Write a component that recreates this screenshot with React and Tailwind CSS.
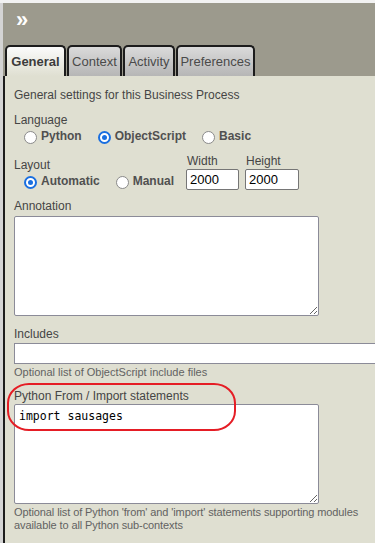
import React from 'react';

const Radio = ({ checked, label }) => (
  <label className="flex items-center gap-[4px] font-bold text-[12px] text-[#505050]">
    {checked ? (
      <span className="w-[13px] h-[13px] rounded-full border-2 border-[#1a6fe0] bg-white flex items-center justify-center">
        <span className="w-[5px] h-[5px] rounded-full bg-[#1a6fe0]" />
      </span>
    ) : (
      <span className="w-[13px] h-[13px] rounded-full border border-[#8a8a8a] bg-white" />
    )}
    <span className="leading-[14px] -mt-[3px]">{label}</span>
  </label>
);

const tabs = [
  { name: 'General', w: 'w-[61px]', active: true },
  { name: 'Context', w: 'w-[55px]' },
  { name: 'Activity', w: 'w-[52px]' },
  { name: 'Preferences', w: 'w-[79px]' },
];

export default function App() {
  return (
    <div className="w-[375px] h-[543px] overflow-hidden bg-[#f2f2f2] pt-[3px] font-['Liberation_Sans',Arial,sans-serif]">
      <div className="flex h-full">
        <div className="w-[3px] shrink-0 bg-[#d4d4d4]" />
        <div className="flex-1 min-w-0 flex flex-col">
          {/* header */}
          <div className="bg-[#9c9a8d] h-[42px] pl-[13px] pt-[6px]">
            <span className="text-white font-bold text-[22px] leading-[22px]">»</span>
          </div>
          {/* tabs */}
          <div className="bg-[#9c9a8d] flex items-end gap-[1px] pl-[2px] h-[31px]">
            {tabs.map((t) => (
              <div
                key={t.name}
                className={`${t.w} h-[31px] border-2 border-b-0 border-[#1c1c1c] rounded-t-[5px] flex items-center justify-center text-[13px] pt-[1px] ${
                  t.active
                    ? 'bg-gradient-to-b from-[#fbfbfb] to-[#dfdfd1] font-bold text-[#3c3c3c]'
                    : 'bg-gradient-to-b from-[#dadada] to-[#b6b6b6] text-[#4a4a4a]'
                }`}
              >
                {t.name}
              </div>
            ))}
          </div>
          {/* body */}
          <div className="flex-1 relative overflow-hidden bg-[#dfdfd1] border-l-2 border-[#1c1c1c] pl-[9px] pt-[12px] text-[12px] text-[#454545]">
            <div className="leading-[14px]">General settings for this Business Process</div>

            <div className="leading-[14px] mt-[11px]">Language</div>
            <div className="flex items-center mt-[4px] pl-[10px] gap-[16px]">
              <Radio label="Python" />
              <Radio label="ObjectScript" checked />
              <Radio label="Basic" />
            </div>

            <div className="flex mt-[10px]">
              <div className="w-[172px]">
                <div className="leading-[14px] mt-[4px]">Layout</div>
                <div className="flex items-center mt-[4px] pl-[10px] gap-[16px]">
                  <Radio label="Automatic" checked />
                  <Radio label="Manual" />
                </div>
              </div>
              <div className="flex gap-[6px]">
                <div>
                  <div className="leading-[14px] pl-[1px]">Width</div>
                  <input
                    defaultValue="2000"
                    className="mt-[1px] w-[53px] h-[21px] bg-white border border-[#767676] rounded-[2px] px-[3px] text-[13px] text-black outline-none"
                  />
                </div>
                <div>
                  <div className="leading-[14px] pl-[1px]">Height</div>
                  <input
                    defaultValue="2000"
                    className="mt-[1px] w-[54px] h-[21px] bg-white border border-[#767676] rounded-[2px] px-[3px] text-[13px] text-black outline-none"
                  />
                </div>
              </div>
            </div>

            <div className="leading-[14px] mt-[9px]">Annotation</div>
            <textarea className="block mt-[3px] w-[305px] h-[100px] bg-white border border-[#8b8b98] rounded-[2px] outline-none" />

            <div className="leading-[14px] mt-[11px]">Includes</div>
            <input className="block mt-[2px] w-[400px] h-[21px] bg-white border border-[#8b8b98] outline-none" />
            <div className="text-[11px] leading-[13px] mt-[2px] text-[#626262]">Optional list of ObjectScript include files</div>

            <div className="leading-[14px] mt-[10px]">Python From / Import statements</div>
            <textarea
              defaultValue="import sausages"
              className="block mt-[1px] w-[305px] h-[100px] bg-white border border-[#8b8b98] rounded-[2px] px-[4px] pt-[3px] font-['DejaVu_Sans_Mono',monospace] text-[11.5px] text-black outline-none"
            />
            <div className="w-[362px] text-[11px] leading-[13px] mt-[2px] text-[#626262] tracking-[-0.1px]">
              Optional list of Python 'from' and 'import' statements supporting modules available to all Python sub-contexts
            </div>

            {/* red highlight */}
            <div className="absolute left-[2px] top-[307px] w-[229px] h-[48px] border-2 border-[#e51d25] rounded-[22px/20px] pointer-events-none" />
          </div>
        </div>
      </div>
    </div>
  );
}
